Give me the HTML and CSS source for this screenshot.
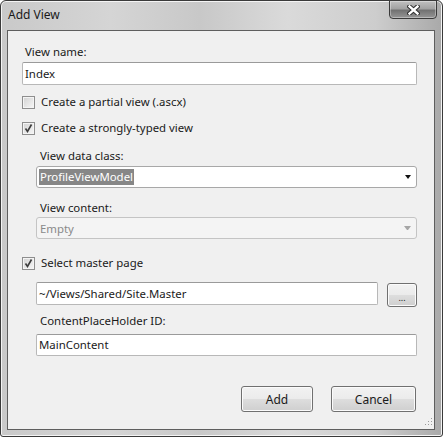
FILE: index.html
```html
<!DOCTYPE html>
<html lang="en">
<head>
    <meta charset="UTF-8">
    <title>Add View</title>
    <link rel="stylesheet" href="styles.css">
</head>
<body>
    <div class="window">
        <div class="titlebar">
            <span class="title">Add View</span>
            <div class="closeBtn">
                <svg width="13" height="10" viewBox="0 0 13 10">
                    <path d="M2.5 1.5 L10.5 8.5 M10.5 1.5 L2.5 8.5" stroke="#2e2e2e" stroke-width="4.4" stroke-linecap="square"/>
                    <path d="M2.5 1.5 L10.5 8.5 M10.5 1.5 L2.5 8.5" stroke="#ffffff" stroke-width="2.4" stroke-linecap="square"/>
                </svg>
            </div>
        </div>
        <div class="client">
            <div class="label">View name:</div>
            <div class="field">Index</div>

            <div class="checkRow first">
                <span class="checkbox"></span>
                <span>Create a partial view (.ascx)</span>
            </div>
            <div class="checkRow">
                <span class="checkbox checked">
                    <svg width="11" height="11" viewBox="0 0 11 11"><path d="M2.5 5.5 L4.5 8.5 L8.5 1.5" fill="none" stroke="#3c3c3c" stroke-width="1.6"/></svg>
                </span>
                <span>Create a strongly-typed view</span>
            </div>

            <div class="group">
                <div class="label groupLabel">View data class:</div>
                <div class="combo">
                    <span class="selected">ProfileViewModel</span>
                    <span class="arrow"></span>
                </div>
                <div class="label contentLabel">View content:</div>
                <div class="combo disabled">
                    <span>Empty</span>
                    <span class="arrow"></span>
                </div>
            </div>

            <div class="checkRow master">
                <span class="checkbox checked">
                    <svg width="11" height="11" viewBox="0 0 11 11"><path d="M2.5 5.5 L4.5 8.5 L8.5 1.5" fill="none" stroke="#3c3c3c" stroke-width="1.6"/></svg>
                </span>
                <span>Select master page</span>
            </div>

            <div class="group">
                <div class="masterRow">
                    <div class="field masterField">~/Views/Shared/Site.Master</div>
                    <div class="btn browse">...</div>
                </div>
                <div class="label holderLabel">ContentPlaceHolder ID:</div>
                <div class="field holderField">MainContent</div>
            </div>

            <div class="buttons">
                <div class="btn addBtn">Add</div>
                <div class="btn cancelBtn">Cancel</div>
            </div>
        </div>
        <svg class="grip" width="9" height="9" viewBox="0 0 9 9">
            <rect x="7" y="1" width="1" height="1" fill="#9a9a9a"/>
            <rect x="4" y="4" width="1" height="1" fill="#9a9a9a"/>
            <rect x="7" y="4" width="1" height="1" fill="#9a9a9a"/>
            <rect x="1" y="7" width="1" height="1" fill="#9a9a9a"/>
            <rect x="4" y="7" width="1" height="1" fill="#9a9a9a"/>
            <rect x="7" y="7" width="1" height="1" fill="#9a9a9a"/>
        </svg>
    </div>
</body>
</html>
```

FILE: styles.css
```css
* {
    box-sizing: border-box;
}
body {
    margin: 0;
    background-color: #ffffff;
    font-family: "Noto Sans", "Open Sans", sans-serif;
    font-size: 11.4px;
    color: #1a1a1a;
}
.window {
    position: relative;
    width: 443px;
    height: 437px;
    border: 1px solid #3a3a3a;
    border-radius: 6px 6px 3px 3px;
    padding: 0 7px 6px 6px;
    background: linear-gradient(to right, #c9c9c9, #d5d5d5 25%, #c8c8c8 45%, #dadada 65%, #cdcdcd 85%, #a9a9a9);
    box-shadow: inset 0 0 0 1px #f4f4f4;
}
.titlebar {
    height: 29px;
    display: flex;
    justify-content: space-between;
    align-items: flex-start;
}
.title {
    padding-left: 1px;
    margin-top: 6px;
    font-size: 12px;
    line-height: 16px;
}
.closeBtn {
    width: 48px;
    height: 19px;
    margin-top: -1px;
    margin-right: -2px;
    border: 1px solid #3a3a3a;
    border-radius: 0 0 4px 4px;
    background: linear-gradient(#c0c0c0, #a2a2a2 45%, #727272 55%, #969696);
    box-shadow: inset 0 0 0 1px rgba(255, 255, 255, 0.35);
    display: flex;
    align-items: center;
    justify-content: center;
}
.client {
    height: 400px;
    border: 1px solid #5e5e5e;
    background-color: #f0f0f0;
    padding: 13px 17px 0 14px;
}
.label {
    line-height: 16px;
    height: 16px;
    padding-left: 3px;
}
.field {
    height: 23px;
    margin-top: 2px;
    border: 1px solid #b8b8b8;
    border-top-color: #9a9a9a;
    border-radius: 2px;
    background-color: #ffffff;
    padding-left: 2px;
    line-height: 21px;
}
.checkRow {
    height: 16px;
    margin-top: 10px;
    display: flex;
    align-items: center;
    gap: 6px;
    line-height: 16px;
}
.checkRow.first {
    margin-top: 9px;
}
.checkRow.master {
    margin-top: 16px;
}
.checkbox {
    width: 13px;
    height: 13px;
    border: 1px solid #8e8e8e;
    background: linear-gradient(135deg, #d2d2d2, #f7f7f7);
    box-shadow: inset 0 0 0 1px #f4f4f4;
    display: flex;
    align-items: center;
    justify-content: center;
}
.group {
    padding-left: 14px;
}
.groupLabel {
    margin-top: 12px;
    padding-left: 4px;
}
.contentLabel {
    margin-top: 12px;
    padding-left: 4px;
}
.combo {
    height: 22px;
    margin-top: 2px;
    border: 1px solid #a8a8a8;
    border-radius: 3px;
    background-color: #ffffff;
    display: flex;
    align-items: center;
    padding-left: 2px;
}
.combo .selected {
    background-color: #878787;
    color: #ffffff;
    line-height: 16px;
    padding: 0 1px;
}
.combo .arrow {
    margin-left: auto;
    margin-right: 5px;
    width: 0;
    height: 0;
    border-left: 3.5px solid transparent;
    border-right: 3.5px solid transparent;
    border-top: 4px solid #111111;
}
.combo.disabled {
    margin-top: 1px;
    background-color: #f4f4f4;
    border-color: #c4c4c4;
    color: #8a8a8a;
}
.combo.disabled span {
    padding-left: 1px;
}
.combo.disabled .arrow {
    border-top-color: #a6a6a6;
}
.masterRow {
    margin-top: 11px;
    height: 25px;
    display: flex;
    gap: 9px;
}
.masterField {
    flex: 1;
    margin-top: 0;
}
.btn {
    height: 26px;
    border: 1px solid #707070;
    border-radius: 3px;
    background: linear-gradient(#f2f2f2, #ebebeb 48%, #dddddd 52%, #cfcfcf);
    box-shadow: inset 0 0 0 1px #fbfbfb;
    display: flex;
    align-items: center;
    justify-content: center;
    font-size: 12px;
}
.browse {
    width: 30px;
    height: 24px;
    margin-top: 1px;
    font-size: 9px;
    padding-top: 4px;
}
.holderLabel {
    margin-top: 6px;
    padding-left: 4px;
}
.holderField {
    margin-top: 5px;
    height: 22px;
    line-height: 20px;
}
.buttons {
    margin-top: 30px;
    display: flex;
    justify-content: flex-end;
    gap: 18px;
    padding-right: 1px;
}
.addBtn {
    width: 72px;
}
.cancelBtn {
    width: 85px;
}
.grip {
    position: absolute;
    right: 9px;
    bottom: 10px;
}
```
